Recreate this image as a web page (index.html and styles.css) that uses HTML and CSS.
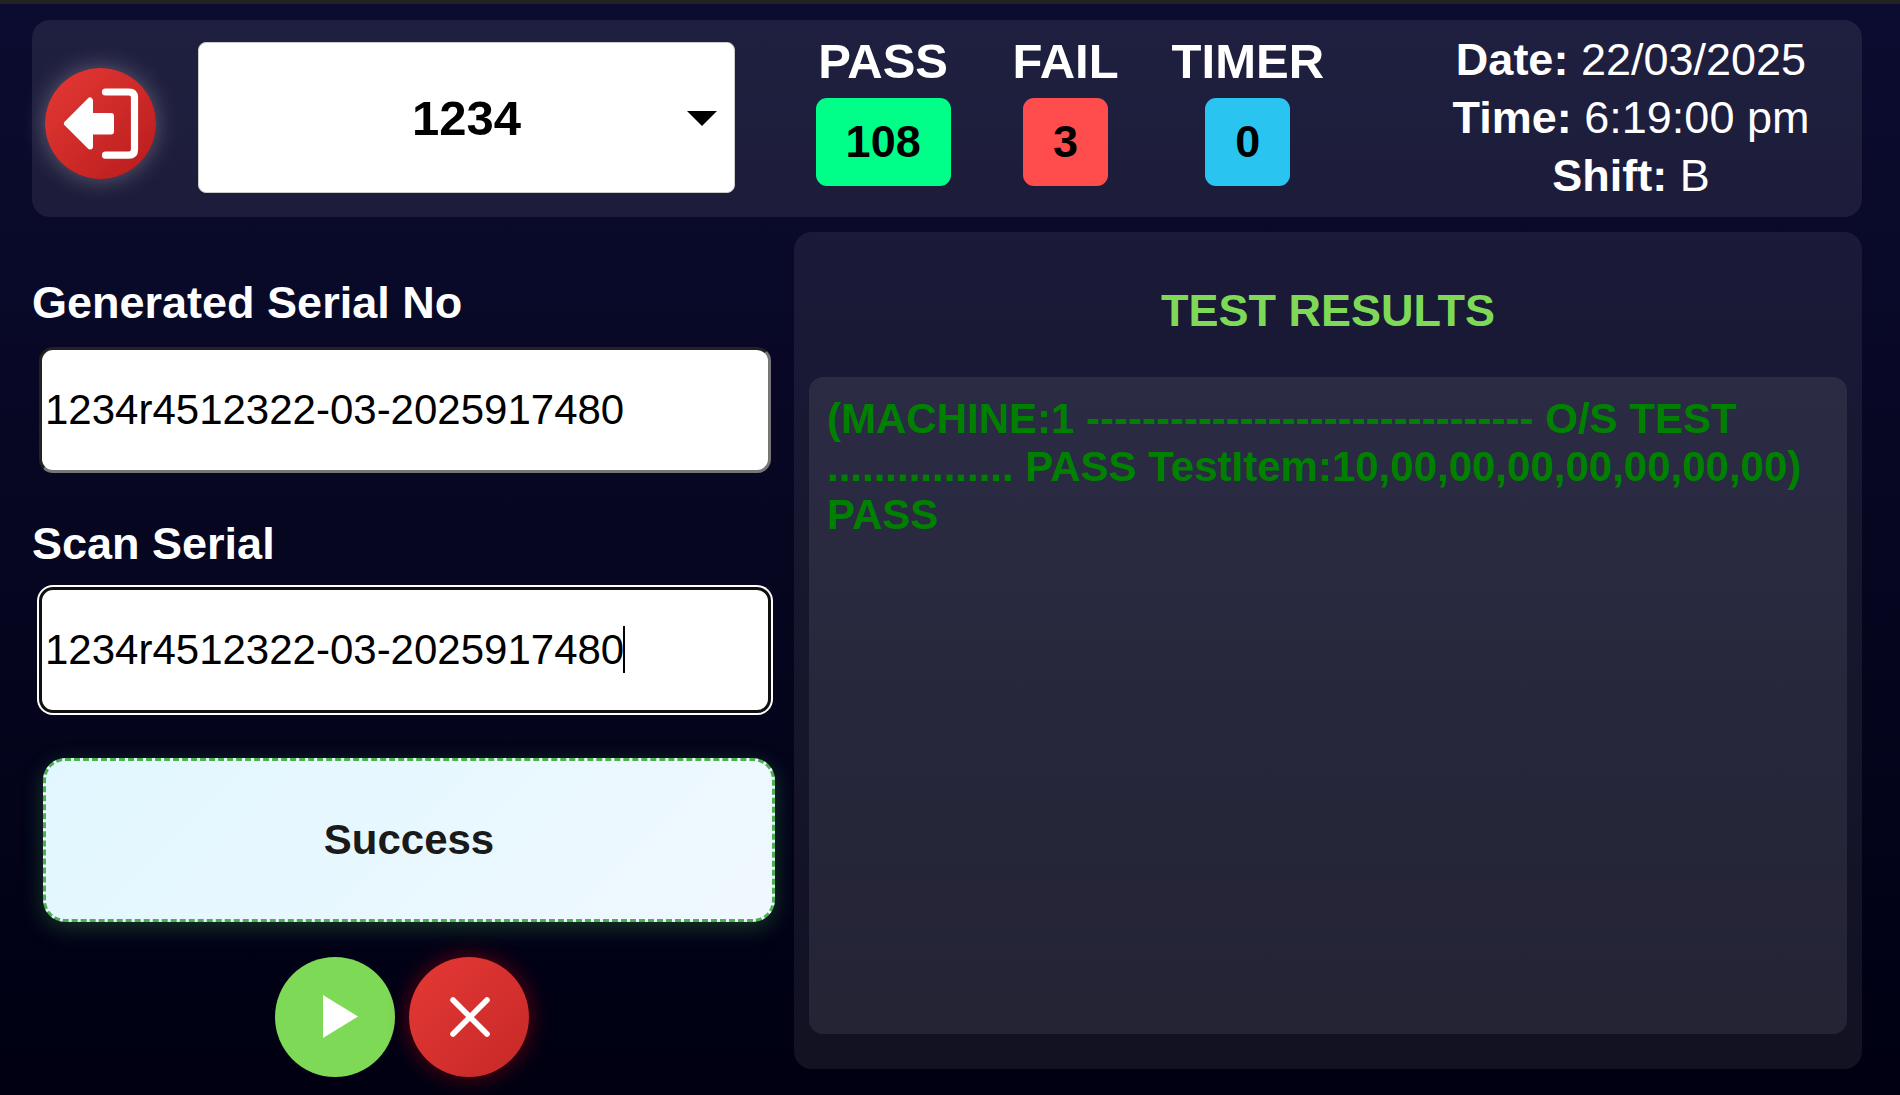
FILE: index.html
```
<!DOCTYPE html>
<html lang="en">
<head>
    <meta charset="UTF-8">
    <meta name="viewport" content="width=device-width, initial-scale=1.0">
    <title>Test Station</title>
    <link rel="stylesheet" href="styles.css">
</head>
<body>
    <header class="header">
        <button class="logout-btn" type="button" aria-label="Logout">
            <svg viewBox="0 0 111 111" fill="#fff" stroke="#fff" stroke-linecap="round" stroke-linejoin="round">
                <path d="M22 55.5 L45 32.5 V48 H66 V63.5 H45 V78.5 Z" stroke-width="6"/>
                <path d="M60.5 24 H84 Q89.5 24 89.5 29.5 V81.5 Q89.5 87.2 84 87.2 H60.5" fill="none" stroke-width="7.2"/>
            </svg>
        </button>

        <div class="select-wrap">
            <select class="model-select" aria-label="Model">
                <option>1234</option>
            </select>
        </div>

        <div class="stats">
            <div class="stat">
                <span class="stat-label">PASS</span>
                <span class="stat-value pass">108</span>
            </div>
            <div class="stat">
                <span class="stat-label">FAIL</span>
                <span class="stat-value fail">3</span>
            </div>
            <div class="stat">
                <span class="stat-label">TIMER</span>
                <span class="stat-value timer">0</span>
            </div>
        </div>

        <div class="info">
            <div><strong>Date:</strong> 22/03/2025</div>
            <div><strong>Time:</strong> 6:19:00 pm</div>
            <div><strong>Shift:</strong> B</div>
        </div>
    </header>

    <main class="main">
        <section class="left-panel">
            <div class="field">
                <label for="generatedSerial">Generated Serial No</label>
                <div class="input-wrap">
                    <input type="text" id="generatedSerial" value="1234r4512322-03-2025917480" readonly>
                </div>
            </div>
            <div class="field">
                <label for="scanSerial">Scan Serial</label>
                <div class="input-wrap active">
                    <input type="text" id="scanSerial" value="1234r4512322-03-2025917480">
                </div>
            </div>
            <div class="status">Success</div>
            <div class="controls">
                <button class="round-btn start-btn" type="button" aria-label="Start">
                    <svg viewBox="0 0 120 120"><path d="M48 38 L83 59.5 L48 81 Z" fill="#fff"/></svg>
                </button>
                <button class="round-btn stop-btn" type="button" aria-label="Stop">
                    <svg viewBox="0 0 120 120"><path d="M44 43 L78 77 M78 43 L44 77" stroke="#fff" stroke-width="5.6" stroke-linecap="round"/></svg>
                </button>
            </div>
        </section>

        <section class="results">
            <h2>TEST RESULTS</h2>
            <div class="results-box">(MACHINE:1 -------------------------------- O/S TEST ................ PASS TestItem:10,00,00,00,00,00,00,00) PASS</div>
        </section>
    </main>

    <script>
        // Keep the scanner field ready for input
        const scanSerial = document.getElementById('scanSerial');
        scanSerial.focus();
        scanSerial.setSelectionRange(scanSerial.value.length, scanSerial.value.length);
    </script>
</body>
</html>
```
FILE: styles.css
```
* {
    box-sizing: border-box;
}
body {
    margin: 0;
    min-height: 100vh;
    padding: 16px 38px 18px 32px;
    border-top: 4px solid #222;
    display: flex;
    flex-direction: column;
    gap: 15px;
    font-family: Arial, "Liberation Sans", sans-serif;
    color: white;
    background: linear-gradient(to bottom, #0c0c30, #000012);
}
button {
    padding: 0;
    border: none;
    border-radius: 50%;
    cursor: pointer;
}
button svg {
    display: block;
    width: 100%;
    height: 100%;
}

/* Header */
.header {
    display: grid;
    grid-template-columns: 111px 537fr 577fr 453fr;
    column-gap: 42px;
    align-items: center;
    padding: 11px 13px 12px;
    border-radius: 18px;
    background: rgba(255, 255, 255, 0.08);
}
.logout-btn {
    width: 111px;
    height: 111px;
    margin-top: 10px;
    background: linear-gradient(135deg, #e53935, #b71c1c);
    box-shadow: 0 0 24px rgba(255, 255, 255, 0.3);
}
.select-wrap {
    position: relative;
    align-self: start;
    margin-top: 11px;
}
.select-wrap::after {
    content: "";
    position: absolute;
    right: 18px;
    top: 50%;
    margin-top: -7px;
    border: 15px solid transparent;
    border-top-color: black;
    border-bottom: none;
    pointer-events: none;
}
.model-select {
    display: block;
    width: 100%;
    height: 151px;
    border: 1px solid #ccc;
    border-radius: 8px;
    appearance: none;
    background: white;
    color: black;
    font: bold 49px Arial, "Liberation Sans", sans-serif;
    text-align: center;
    text-align-last: center;
}
.stats {
    display: grid;
    grid-template-columns: repeat(3, 1fr);
    align-self: start;
    padding: 0 15px;
}
.stat {
    display: flex;
    flex-direction: column;
    align-items: center;
    gap: 6px;
    font-weight: bold;
}
.stat-label {
    font-size: 49px;
    line-height: 61px;
}
.stat-value {
    padding: 18px 30px;
    border-radius: 11px;
    font-size: 45px;
    line-height: 52px;
    color: black;
}
.pass {
    background: #00ff88;
}
.fail {
    background: #ff4d4d;
}
.timer {
    background: #29c5f0;
}
.info {
    padding-left: 17px;
    font-size: 45px;
    line-height: 58px;
    text-align: center;
}

/* Main area */
.main {
    flex: 1;
    display: grid;
    grid-template-columns: 740fr 1068fr;
    gap: 22px;
}
.field {
    display: flex;
    flex-direction: column;
    gap: 18px;
    margin-top: 45px;
}
.field + .field {
    gap: 17px;
}
.field label {
    font-size: 45px;
    font-weight: bold;
    line-height: 52px;
}
.input-wrap {
    position: relative;
    margin: 0 1px 0 7px;
}
.input-wrap input {
    display: block;
    width: 100%;
    height: 126px;
    padding: 3px;
    border: 3px solid;
    border-color: #222 #767676 #767676 #222;
    border-radius: 14px;
    outline: none;
    background: white;
    color: black;
    font-family: inherit;
    font-size: 42px;
}
.active input {
    border-color: #101010;
    box-shadow: 0 0 0 2px white;
    caret-color: transparent;
}
/* Text cursor of the scan field */
.active::after {
    content: "";
    position: absolute;
    left: 584px;
    top: 39px;
    width: 2px;
    height: 47px;
    background: black;
}
.status {
    display: flex;
    align-items: center;
    justify-content: center;
    height: 164px;
    margin: 45px -3px 0 11px;
    border: 3px dashed #4caf50;
    border-radius: 22px;
    background: linear-gradient(135deg, #e1f7ff, #f0f8ff);
    box-shadow: 0 6px 22px rgba(76, 175, 80, 0.3);
    color: #1a1a1a;
    font-size: 42px;
    font-weight: bold;
}
.controls {
    display: flex;
    justify-content: center;
    gap: 14px;
    margin-top: 35px;
}
.round-btn {
    width: 120px;
    height: 120px;
}
.start-btn {
    background: #7ed957;
}
.stop-btn {
    background: linear-gradient(135deg, #e53935, #c62828);
    box-shadow: 0 0 22px rgba(255, 0, 0, 0.4);
}

/* Results */
.results {
    display: flex;
    flex-direction: column;
    margin-bottom: 8px;
    padding: 0 15px 35px;
    border-radius: 18px;
    background: rgba(255, 255, 255, 0.07);
}
.results h2 {
    margin: 53px 0 40px;
    font-size: 45px;
    line-height: 52px;
    text-align: center;
    color: #7ed957;
}
.results-box {
    flex: 1;
    padding: 18px;
    border-radius: 14px;
    background: rgba(255, 255, 255, 0.08);
    color: green;
    font-size: 42px;
    font-weight: bold;
    line-height: 48px;
}
```
